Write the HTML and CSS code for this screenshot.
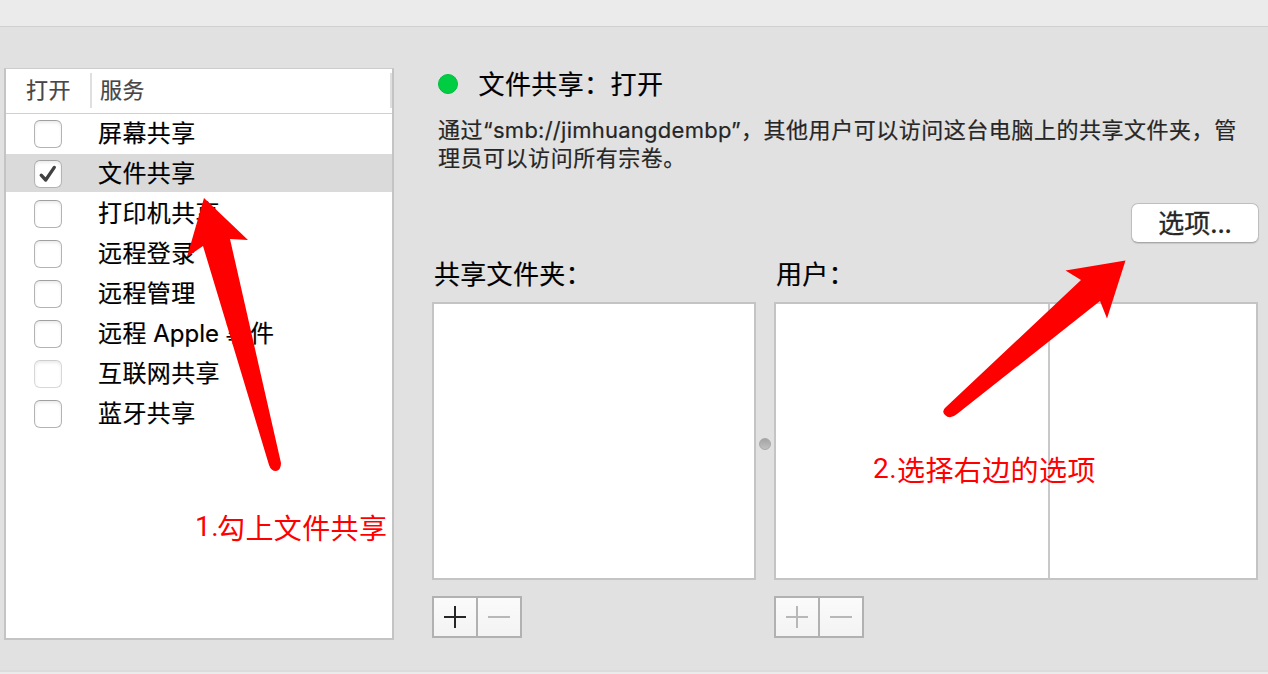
FILE: index.html
```
<!DOCTYPE html>
<html lang="zh-CN">
<head>
<meta charset="utf-8">
<title>共享</title>
<link rel="stylesheet" href="styles.css">
</head>
<body>
<div class="window">
  <header class="toolbar"></header>
  <main class="content">
    <section class="services">
      <div class="services-head"><span class="col-on">打开</span><span class="col-name">服务</span></div>
      <ul class="service-list">
        <li class="service"><span class="check"></span><span class="name">屏幕共享</span></li>
        <li class="service selected"><span class="check"><svg class="tick" viewBox="0 0 28 28"><path d="M7.2 15.2 L11.7 20 L20.3 7.4"/></svg></span><span class="name">文件共享</span></li>
        <li class="service"><span class="check"></span><span class="name">打印机共享</span></li>
        <li class="service"><span class="check"></span><span class="name">远程登录</span></li>
        <li class="service"><span class="check"></span><span class="name">远程管理</span></li>
        <li class="service"><span class="check"></span><span class="name">远程<span class="apple">Apple</span>事件</span></li>
        <li class="service"><span class="check disabled"></span><span class="name">互联网共享</span></li>
        <li class="service"><span class="check"></span><span class="name">蓝牙共享</span></li>
      </ul>
    </section>
    <section class="detail">
      <h1 class="status"><span class="light"></span><span class="status-text">文件共享：打开</span></h1>
      <p class="description">通过<span class="address">“smb://jimhuangdembp”</span>，其他用户可以访问这台电脑上的共享文件夹，管<br>理员可以访问所有宗卷。</p>
      <div class="actions"><button class="options">选项...</button></div>
      <div class="panes">
        <div class="pane">
          <h2 class="label">共享文件夹：</h2>
          <div class="box"></div>
          <div class="buttons">
            <button class="edit"><svg viewBox="0 0 42 38"><path d="M10 19H32M21 8V30"/></svg></button>
            <button class="edit off"><svg viewBox="0 0 42 38"><path d="M10 19H32"/></svg></button>
          </div>
        </div>
        <div class="splitter"><span class="knob"></span></div>
        <div class="pane users">
          <h2 class="label">用户：</h2>
          <div class="box"><span class="column"></span></div>
          <div class="buttons">
            <button class="edit off"><svg viewBox="0 0 42 38"><path d="M10 19H32M21 8V30"/></svg></button>
            <button class="edit off"><svg viewBox="0 0 42 38"><path d="M10 19H32"/></svg></button>
          </div>
        </div>
      </div>
    </section>
  </main>
  <footer class="bottom"></footer>
  <svg class="arrows" viewBox="0 0 1268 674">
    <path d="M204 198L248 240L230 239L281 463Q281 470 276 471Q271 471 269 465L203 246L187 257Z"/>
    <path d="M1125.500 260.500L1107 318.500L1100 301L957 414Q950 420 945 415Q941 411 946 407L1081 280L1065.500 270.500Z"/>
  </svg>
  <p class="note note-one"><span class="digit">1.</span>勾上文件共享</p>
  <p class="note note-two"><span class="digit">2.</span>选择右边的选项</p>
</div>
</body>
</html>
```
FILE: styles.css
```
* { box-sizing: border-box; }
body { margin: 0; }
.window {
  position: relative;
  display: flex;
  flex-direction: column;
  width: 1268px;
  height: 674px;
  overflow: hidden;
  background: #e1e1e1;
  color: #000;
  font-family: "Noto Sans CJK SC", sans-serif;
  -webkit-text-stroke: .2px;
}
.toolbar { height: 27px; flex: none; background: #ebebeb; border-bottom: 1px solid #d0d0d0; }
.content { display: flex; flex: 1; padding-left: 4px; }
.bottom { height: 4px; flex: none; background: #ebebeb; border-top: 2px solid #dcdcdc; }

.services {
  width: 390px;
  height: 572px;
  margin-top: 41px;
  background: #fff;
  border: 2px solid #c4c4c4;
  border-top: 1px solid #cdcdcd;
}
.services-head {
  display: flex;
  height: 45px;
  padding-top: 4px;
  border-bottom: 1px solid #d0d0d0;
  color: #464646;
  font-size: 22px;
  line-height: 30px;
  letter-spacing: .4px;
}
.col-on { width: 86px; height: 35px; padding-left: 20px; border-right: 2px solid #dfdfdf; }
.col-name { flex: 1; height: 35px; padding-left: 8px; border-right: 2px solid #dfdfdf; }
.service-list { margin: 0; padding: 0; list-style: none; }
.service {
  display: flex;
  height: 38px;
  margin-bottom: 2px;
  padding: 6px 0 0 28px;
}
.service.selected { background: #dadada; }
.check {
  width: 28px;
  height: 28px;
  margin-right: 36px;
  background: #fff;
  border: 1px solid #b4b4b4;
  border-top-color: #a0a0a0;
  border-radius: 6px;
  box-shadow: inset 0 2px 3px #ececec;
}
.check.disabled { border-color: #d8d8d8; border-top-color: #cecece; }
.tick { display: block; width: 28px; height: 28px; margin: -1px; fill: none; stroke: #414141; stroke-width: 3.300; stroke-linecap: round; stroke-linejoin: round; }
.name { font-size: 24px; line-height: 24px; letter-spacing: .4px; white-space: nowrap; }
.apple { margin: 0 6.500px; font-family: Inter, sans-serif; font-size: 24px; letter-spacing: 0; }

.detail { width: 827px; margin-left: 38px; }
.status {
  display: flex;
  align-items: center;
  height: 36px;
  margin: 39px 0 0;
  padding-left: 6px;
  font-size: 26px;
  font-weight: 400;
  letter-spacing: .4px;
}
.status-text { padding: 0 0 4px .5px; }
.light { width: 20px; height: 20px; margin-right: 20px; border-radius: 50%; background: #00cd42; border: 1px solid #00bd3d; }
.description {
  height: 59px;
  margin: 12px 0 0;
  padding-left: 6px;
  color: #262626;
  font-size: 22px;
  line-height: 28px;
  letter-spacing: .53px;
  white-space: nowrap;
}
.address { font-family: Inter, sans-serif; line-height: 1; letter-spacing: .25px; }
.actions { display: flex; justify-content: flex-end; height: 71px; padding-top: 30px; }
.options {
  width: 128px;
  height: 40px;
  padding: 0 0 3px;
  color: #262626;
  background: #fff;
  border: 1px solid #bebebe;
  border-bottom-color: #a8a8a8;
  border-radius: 7px;
  box-shadow: 0 1px 1px #c8c8c8;
  font: 26px/34px "Noto Sans CJK SC", sans-serif;
  -webkit-text-stroke: .3px;
}
.panes { display: flex; }
.pane { width: 324px; }
.pane.users { width: 484px; }
.label { height: 58px; margin: 0; padding: 12px 0 0 2px; font-size: 26px; line-height: 34px; font-weight: 400; letter-spacing: .3px; }
.box { display: flex; height: 278px; background: #fff; border: 2px solid #c4c4c4; }
.column { width: 274px; border-right: 2px solid #c9c9c9; }
.splitter { width: 18px; padding: 194px 0 0 3px; }
.knob { display: block; width: 12px; height: 12px; border-radius: 50%; background: linear-gradient(#a4a4a4, #c0c0c0); border: 1px solid #a8a8a8; }
.buttons { display: flex; width: 90px; height: 42px; margin-top: 16px; gap: 2px; padding: 2px; background: #b1b1b1; }
.edit { width: 42px; height: 38px; padding: 0; border: 0; background: linear-gradient(#fbfbfb, #f3f3f3); }
.edit svg { display: block; width: 42px; height: 38px; stroke: #262626; stroke-width: 2; }
.edit.off svg { stroke: #b8b8b8; }

.arrows { position: absolute; inset: 0; width: 1268px; height: 674px; fill: #f00; }
.note {
  position: absolute;
  display: flex;
  margin: 0;
  color: #f00;
  font-size: 28px;
  line-height: 40px;
  font-weight: 400;
  letter-spacing: .4px;
  white-space: nowrap;
  -webkit-text-stroke: 0;
}
.digit { width: 23px; font-family: Roboto, sans-serif; }
.note-one { left: 195px; top: 507px; }
.note-one .digit { width: 22px; }
.note-two { left: 873px; top: 449px; }
.note-two .digit { width: 24px; }
```
